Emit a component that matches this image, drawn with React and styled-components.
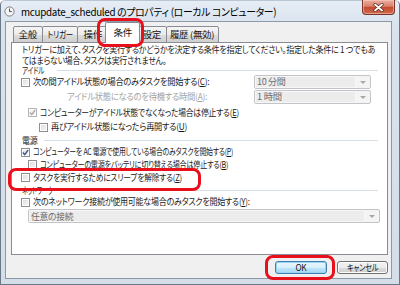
import React, { useLayoutEffect, useRef, useState } from 'react';
import styled, { createGlobalStyle } from 'styled-components';

const GlobalStyle = createGlobalStyle`
  html, body { margin: 0; padding: 0; overflow: hidden; background: #fff; }
  #root { width: 400px; height: 285px; }
  * { box-sizing: border-box; }
`;

const Window = styled.div`
  position: relative;
  width: 400px;
  height: 285px;
  display: flex;
  flex-direction: column;
  background: linear-gradient(#e6edf5, #d9e3ee 24px, #d4dee9);
  border: 1px solid #6b7888;
  border-top-color: #b9c6d4;
  border-radius: 5px 5px 0 0;
  font-family: "Noto Sans CJK JP", "Noto Sans", sans-serif;
  font-feature-settings: "palt";
  letter-spacing: -0.3px;
  color: #1a1a1a;
`;

const TitleBar = styled.div`
  height: 20px;
  display: flex;
  align-items: center;
  gap: 6px;
  padding: 0 4px 0 3px;
  font-size: 10.5px;
  color: #000;
  white-space: nowrap;
`;

/* Meiryo UI kana are much narrower than Noto's, so each label is squeezed to the reference width */
const Label = styled.span`
  display: inline-block;
  flex: none;
  transform-origin: ${(p) => (p.$center ? 'center' : 'left center')};
  color: ${(p) => (p.$dim ? '#a3a3a3' : 'inherit')};
`;

const CloseButton = styled.div`
  align-self: flex-start;
  margin-left: auto;
  margin-top: -1px;
  width: 33px;
  height: 15px;
  display: flex;
  align-items: center;
  justify-content: center;
  border: 1px solid #7a3528;
  border-top: none;
  border-radius: 0 0 4px 4px;
  background: linear-gradient(#eab0a2, #d9806b 45%, #c4492f 52%, #cf6a4d);
  box-shadow: inset 0 0 0 1px rgba(255, 210, 200, 0.5);
`;

const Body = styled.div`
  flex: 1;
  margin: 0 7px 5px 4px;
  display: flex;
  flex-direction: column;
  padding: 0 3px 0 5px;
  background: #f0f0f0;
  border: 1px solid #8c99a8;
`;

const TabRow = styled.div`
  height: 21px;
  display: flex;
  align-items: flex-end;
  padding-left: 2px;
  margin-bottom: -1px;
  position: relative;
  z-index: 1;
`;

const Tab = styled.div`
  position: relative;
  width: ${(p) => p.$w + (p.$active ? 4 : 0)}px;
  height: ${(p) => (p.$active ? 21 : 17)}px;
  margin-right: ${(p) => (p.$active ? -2 : 0)}px;
  margin-left: ${(p) => (p.$active ? -3 : -1)}px;
  z-index: ${(p) => (p.$active ? 2 : 1)};
  display: flex;
  align-items: center;
  justify-content: center;
  padding-bottom: ${(p) => (p.$active ? 2 : 0)}px;
  font-size: 9px;
  color: #111;
  white-space: nowrap;
  border: 1px solid #898c95;
  border-bottom: ${(p) => (p.$active ? 'none' : '1px solid #898c95')};
  border-radius: 2px 2px 0 0;
  background: ${(p) =>
    p.$active ? '#fff' : 'linear-gradient(#f5f5f5, #ebebeb 50%, #dddddd 51%, #cfcfcf)'};
  &:first-child { margin-left: 0; }
`;

const Panel = styled.div`
  height: 213px;
  display: flex;
  flex-direction: column;
  padding: 0 7px 0 9px;
  background: #fff;
  border: 1px solid #898c95;
`;

const Desc = styled.div`
  margin-top: 1px;
  padding-left: 1px;
  display: flex;
  flex-direction: column;
  align-items: flex-start;
  font-size: 9px;
  line-height: 11px;
  white-space: nowrap;
  color: #1a1a1a;
`;

const GroupHead = styled.div`
  height: ${(p) => p.$h}px;
  display: flex;
  align-items: center;
  gap: 5px;
  padding: 0 2px 0 1px;
  font-size: 9px;
  line-height: 9px;
  white-space: nowrap;
  &::after {
    content: '';
    flex: 1;
    height: 1px;
    background: #d5dfe5;
  }
`;

const Row = styled.div`
  height: ${(p) => p.$h}px;
  display: flex;
  align-items: center;
  padding-left: ${(p) => p.$indent || 0}px;
  padding-right: ${(p) => p.$pr || 0}px;
  font-size: 9px;
  line-height: 10px;
  white-space: nowrap;
  color: #1a1a1a;
`;

const Box = styled.span`
  width: 9px;
  height: 9px;
  flex: none;
  margin-right: 3px;
  display: flex;
  align-items: center;
  justify-content: center;
  border: 1px solid ${(p) => (p.$disabled ? '#b5b5b5' : '#8e8f8f')};
  background: ${(p) =>
    p.$disabled ? '#f4f4f4' : 'linear-gradient(135deg, #d8dbe0, #f8f8f8)'};
  box-shadow: inset 0 0 0 1px #fff;
`;

const Key = styled.span`
  text-decoration: underline;
`;

const Combo = styled.div`
  margin-left: ${(p) => p.$ml || 'auto'};
  width: ${(p) => (p.$w ? `${p.$w}px` : 'auto')};
  flex: ${(p) => (p.$w ? 'none' : 1)};
  height: 14px;
  display: flex;
  border: 1px solid #c2c4c9;
  border-radius: 2px;
  background: #f4f4f4;
  color: #6d6d6d;
  font-size: 9px;
`;

const ComboText = styled.div`
  flex: 1;
  display: flex;
  align-items: center;
  padding-left: 1px;
  background: #ececec;
  border: 1px solid #f7f7f7;
`;

const ComboArrow = styled.div`
  width: 14px;
  display: flex;
  align-items: center;
  justify-content: center;
  &::before {
    content: '';
    border-left: 3px solid transparent;
    border-right: 3px solid transparent;
    border-top: 3px solid #a8a8a8;
  }
`;

const ComboWrap = styled.div`
  height: 16px;
  display: flex;
  align-items: center;
  padding-left: 7px;
`;

const ButtonRow = styled.div`
  display: flex;
  justify-content: flex-end;
  gap: 10px;
  margin-top: 6px;
`;

const Button = styled.div`
  width: ${(p) => p.$w}px;
  height: 13px;
  display: flex;
  align-items: center;
  justify-content: center;
  font-size: 9px;
  color: #111;
  border: 1px solid ${(p) => (p.$focus ? '#3c7fb1' : '#707070')};
  border-radius: 3px;
  background: ${(p) =>
    p.$focus
      ? 'linear-gradient(#eaf6fd, #d9f0fc 50%, #bee6fd 51%, #a7d9f5)'
      : 'linear-gradient(#f2f2f2, #ebebeb 50%, #dddddd 51%, #cfcfcf)'};
  box-shadow: inset 0 0 0 1px ${(p) => (p.$focus ? '#9cd3f2' : '#fcfcfc')};
`;

const Mark = styled.div`
  position: absolute;
  left: ${(p) => p.$x}px;
  top: ${(p) => p.$y}px;
  width: ${(p) => p.$w}px;
  height: ${(p) => p.$h}px;
  border: 3px solid #e8101a;
  border-radius: 8px;
  pointer-events: none;
  z-index: 5;
`;

function Fit({ w, dim, center, children }) {
  const ref = useRef(null);
  const [sx, setSx] = useState(1);

  useLayoutEffect(() => {
    const measure = () => {
      const natural = ref.current && ref.current.offsetWidth;
      if (natural) setSx(w / natural);
    };
    measure();
    if (document.fonts) document.fonts.ready.then(measure);
  }, [w]);

  return (
    <Label ref={ref} $dim={dim} $center={center} style={{ transform: `scaleX(${sx})` }}>
      {children}
    </Label>
  );
}

function Check({ checked, disabled }) {
  return (
    <Box $disabled={disabled}>
      {checked && (
        <svg width="7" height="7" viewBox="0 0 7 7">
          <path
            d="M0.8 3.6 L2.7 5.6 L6.2 1"
            fill="none"
            stroke={disabled ? '#a9a9a9' : '#3d5a8c'}
            strokeWidth="1.4"
          />
        </svg>
      )}
    </Box>
  );
}

function ClockIcon() {
  return (
    <svg width="11" height="11" viewBox="0 0 11 11">
      <circle cx="5.5" cy="5.5" r="4.6" fill="#f6f6f6" stroke="#7a7f86" strokeWidth="1" />
      <path d="M5.5 2.6 V5.6 H7.8" fill="none" stroke="#4b5058" strokeWidth="1" />
    </svg>
  );
}

function CloseGlyph() {
  return (
    <svg width="11" height="9" viewBox="0 0 11 9">
      <path d="M2 1.5 L9 7.5 M9 1.5 L2 7.5" stroke="#5a2218" strokeWidth="3.2" strokeLinecap="round" />
      <path d="M2 1.5 L9 7.5 M9 1.5 L2 7.5" stroke="#fff" strokeWidth="1.8" strokeLinecap="round" />
    </svg>
  );
}

function Select({ value, width, ml, textW }) {
  return (
    <Combo $w={width} $ml={ml}>
      <ComboText>
        <Fit w={textW}>{value}</Fit>
      </ComboText>
      <ComboArrow />
    </Combo>
  );
}

const tabs = [
  { label: '全般', w: 30, tw: 18 },
  { label: 'トリガー', w: 36, tw: 26 },
  { label: '操作', w: 31, tw: 18 },
  { label: '条件', w: 31, tw: 18, active: true },
  { label: '設定', w: 30, tw: 18 },
  { label: '履歴 (無効)', w: 53, tw: 44 },
];

export default function App() {
  return (
    <>
      <GlobalStyle />
      <Window>
        <TitleBar>
          <ClockIcon />
          <Fit w={255}>mcupdate_scheduled のプロパティ (ローカル コンピューター)</Fit>
          <CloseButton>
            <CloseGlyph />
          </CloseButton>
        </TitleBar>
        <Body>
          <TabRow>
            {tabs.map((t) => (
              <Tab key={t.label} $w={t.w} $active={t.active}>
                <Fit w={t.tw} center>{t.label}</Fit>
              </Tab>
            ))}
          </TabRow>
          <Panel>
            <Desc>
              <Fit w={353}>
                トリガーに加えて、タスクを実行するかどうかを決定する条件を指定してください。指定した条件に 1 つでもあ
              </Fit>
              <Fit w={144}>てはまらない場合、タスクは実行されません。</Fit>
            </Desc>
            <GroupHead $h={9}>
              <Fit w={22}>アイドル</Fit>
            </GroupHead>
            <Row $h={14} $pr={9}>
              <Check />
              <Fit w={176}>
                次の間アイドル状態の場合のみタスクを開始する(<Key>C</Key>):
              </Fit>
              <Select value="10 分間" width={117} textW={29} />
            </Row>
            <Row $h={16} $pr={9} $indent={46}>
              <Fit w={140} dim>
                アイドル状態になるのを待機する時間(<Key>A</Key>):
              </Fit>
              <Select value="1 時間" width={117} textW={25} />
            </Row>
            <Row $h={15} $indent={7}>
              <Check checked disabled />
              <Fit w={199}>
                コンピューターがアイドル状態でなくなった場合は停止する(<Key>E</Key>)
              </Fit>
            </Row>
            <Row $h={14} $indent={18}>
              <Check />
              <Fit w={136}>
                再びアイドル状態になったら再開する(<Key>U</Key>)
              </Fit>
            </Row>
            <GroupHead $h={12}>
              <Fit w={15}>電源</Fit>
            </GroupHead>
            <Row $h={12}>
              <Check checked />
              <Fit w={200}>
                コンピューターを AC 電源で使用している場合のみタスクを開始する(<Key>P</Key>)
              </Fit>
            </Row>
            <Row $h={13} $indent={7}>
              <Check />
              <Fit w={188}>
                コンピューターの電源をバッテリに切り替える場合は停止する(<Key>B</Key>)
              </Fit>
            </Row>
            <Row $h={13}>
              <Check />
              <Fit w={149}>
                タスクを実行するためにスリープを解除する(<Key>Z</Key>)
              </Fit>
            </Row>
            <GroupHead $h={12}>
              <Fit w={31}>ネットワーク</Fit>
            </GroupHead>
            <Row $h={12}>
              <Check />
              <Fit w={217}>
                次のネットワーク接続が使用可能な場合のみタスクを開始する(<Key>Y</Key>):
              </Fit>
            </Row>
            <ComboWrap>
              <Select value="任意の接続" ml="0" textW={42} />
            </ComboWrap>
          </Panel>
          <ButtonRow>
            <Button $w={52} $focus>
              <Fit w={11} center>OK</Fit>
            </Button>
            <Button $w={51}>
              <Fit w={31} center>キャンセル</Fit>
            </Button>
          </ButtonRow>
        </Body>
        <Mark $x={96} $y={17} $w={47} $h={29} />
        <Mark $x={7} $y={167} $w={193} $h={23} />
        <Mark $x={264} $y={254} $w={70} $h={25} />
      </Window>
    </>
  );
}
